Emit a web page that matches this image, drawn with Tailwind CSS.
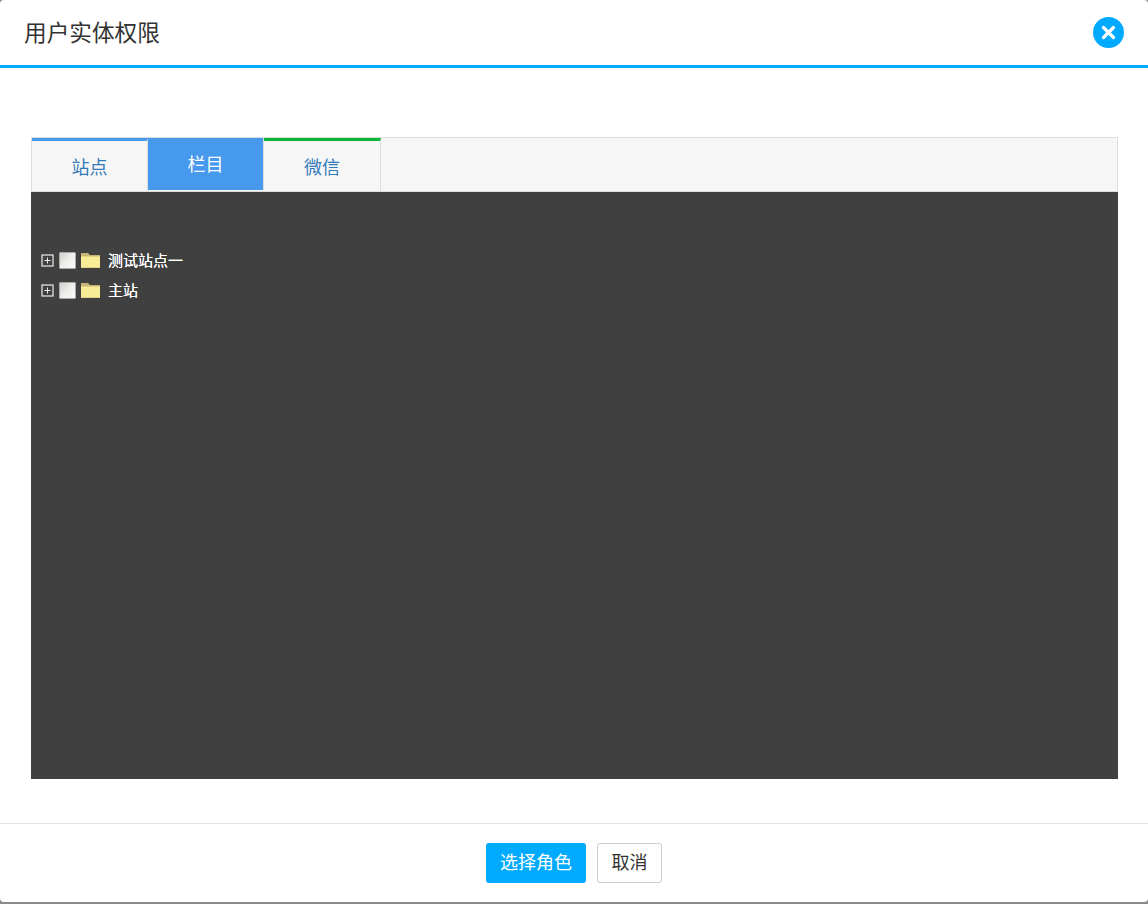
<!DOCTYPE html>
<html lang="zh">
<head>
<meta charset="utf-8">
<script src="https://cdn.jsdelivr.net/npm/@tailwindcss/browser@4"></script>
</head>
<body class="bg-[#8a8a8a] m-0">
<div class="w-[1148px] h-[904px] overflow-hidden">
<div class="flex flex-col w-[1148px] h-[902px] bg-white rounded-[4px] text-[#333] font-['Liberation_Sans','Noto_Sans_CJK_SC',sans-serif]">
  <header class="flex items-center justify-between h-[68px] shrink-0 border-b-[3px] border-[#00aaff] pl-6 pr-6">
    <h1 class="text-[22.67px] leading-none font-normal pt-[2px]">用户实体权限</h1>
    <button class="flex items-center justify-center w-[31px] h-[31px] rounded-full bg-[#00aaff]">
      <svg width="15" height="15" viewBox="0 0 15 15"><path d="M2.500 2.500 12.500 12.500M12.500 2.500 2.500 12.500" stroke="#fff" stroke-width="3.2" stroke-linecap="round"/></svg>
    </button>
  </header>
  <main class="flex-1 flex flex-col pt-[69px] pl-[31px] pr-[30px] pb-[44px]">
    <nav class="flex items-start h-[55px] shrink-0 bg-[#f6f6f6] border border-[#ddd]">
      <a class="flex items-center justify-center w-[116px] h-[55px] pt-[3px] border-t-[3px] border-[#4799ee] border-r border-r-[#ddd] text-[18px] text-[#337ab7]">站点</a>
      <a class="flex items-center justify-center w-[116px] h-[52px] pt-[3px] bg-[#4799ee] border-r border-r-[#ddd] text-[18px] text-white">栏目</a>
      <a class="flex items-center justify-center w-[117px] h-[55px] pt-[3px] border-t-[3px] border-[#0ab637] border-r border-r-[#ddd] text-[18px] text-[#337ab7]">微信</a>
    </nav>
    <section class="flex-1 bg-[#404040] pt-[53px] pl-[10px] text-white text-[15px]">
      <div class="flex items-center h-[30px]">
        <svg width="13" height="13" viewBox="0 0 13 13" class="mr-[5px]"><rect x="1" y="1" width="11" height="11" fill="none" stroke="#eee" stroke-width="1.2"/><path d="M3.500 6.500H9.500M6.500 3.500V9.500" stroke="#eee"/></svg>
        <span class="w-[17px] h-[17px] mr-[5px] rounded-[1px] border border-[#aaa] bg-gradient-to-br from-[#d0d0ca] via-[#eeeeec] to-[#fafafa]"></span>
        <svg width="19" height="16" viewBox="0 0 19 16" class="mr-[8px]"><path d="M0 1H7L9 3H19V16H0Z" fill="#c9b779"/><path d="M0 4.500H19V15.500H0Z" fill="#f8ec96"/></svg>
        <span class="pt-[2px] [text-shadow:0_0_0.6px_#fff]">测试站点一</span>
      </div>
      <div class="flex items-center h-[30px]">
        <svg width="13" height="13" viewBox="0 0 13 13" class="mr-[5px]"><rect x="1" y="1" width="11" height="11" fill="none" stroke="#eee" stroke-width="1.2"/><path d="M3.500 6.500H9.500M6.500 3.500V9.500" stroke="#eee"/></svg>
        <span class="w-[17px] h-[17px] mr-[5px] rounded-[1px] border border-[#aaa] bg-gradient-to-br from-[#d0d0ca] via-[#eeeeec] to-[#fafafa]"></span>
        <svg width="19" height="16" viewBox="0 0 19 16" class="mr-[8px]"><path d="M0 1H7L9 3H19V16H0Z" fill="#c9b779"/><path d="M0 4.500H19V15.500H0Z" fill="#f8ec96"/></svg>
        <span class="pt-[2px] [text-shadow:0_0_0.6px_#fff]">主站</span>
      </div>
    </section>
  </main>
  <footer class="flex items-center justify-center gap-[11px] h-[79px] shrink-0 border-t border-[#e5e5e5] pb-[1px]">
    <button class="w-[100px] h-[40px] pt-[2px] rounded-[3px] bg-[#00aaff] text-white text-[18px]">选择角色</button>
    <button class="w-[65px] h-[40px] pt-[2px] rounded-[3px] bg-white border border-[#ccc] text-[#333] text-[18px]">取消</button>
  </footer>
</div>
</div>
</body>
</html>
